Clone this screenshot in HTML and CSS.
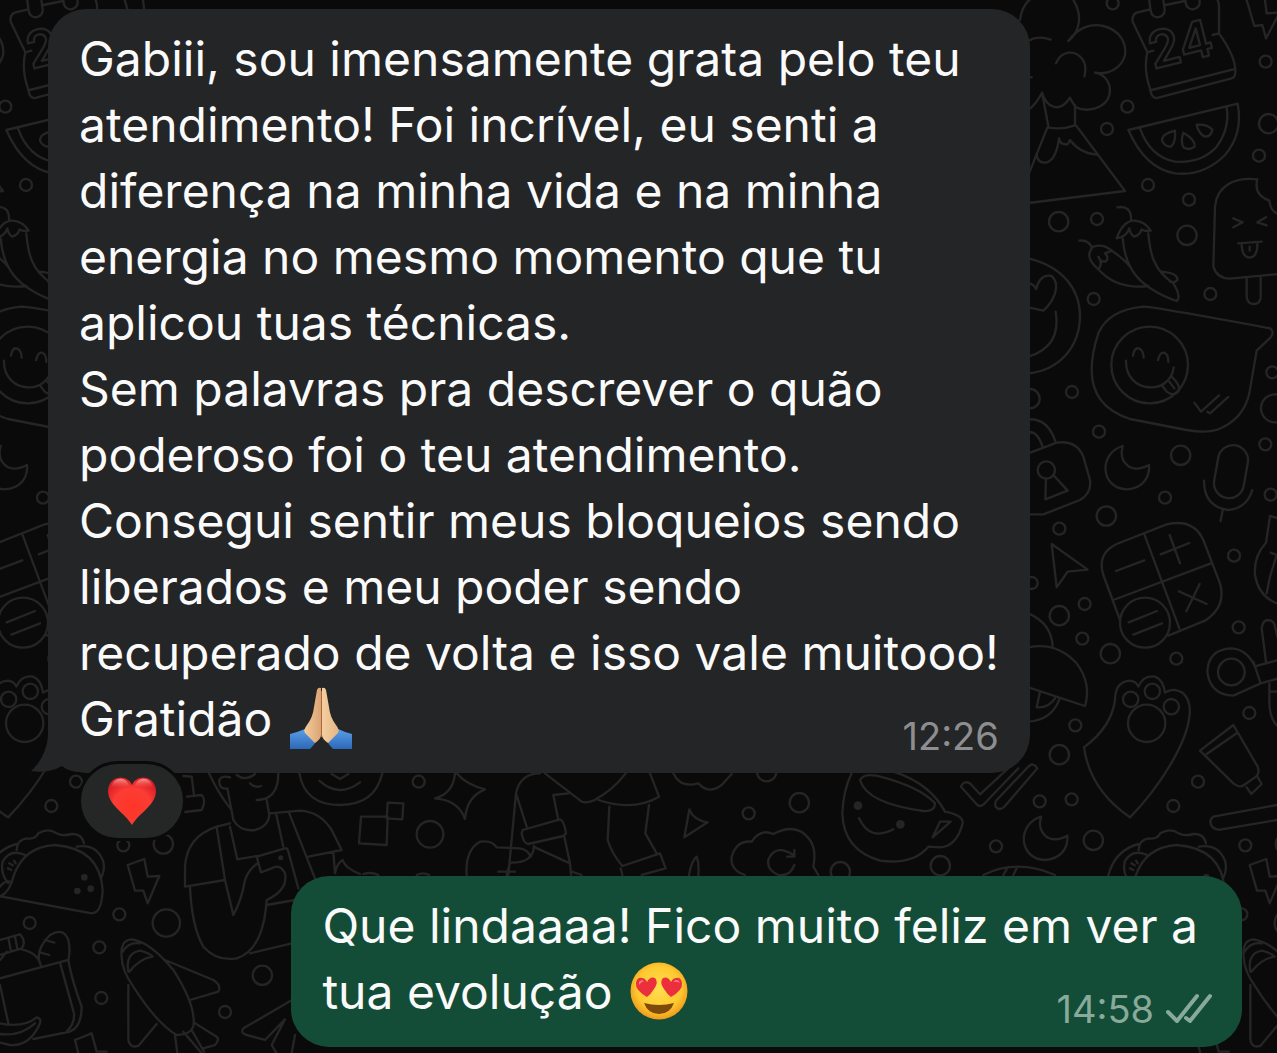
FILE: index.html
```html
<!DOCTYPE html>
<html lang="pt-BR">
<head>
<meta charset="utf-8">
<meta name="viewport" content="width=device-width, initial-scale=1">
<title>Conversa</title>
<link rel="stylesheet" href="styles.css">
</head>
<body>
<svg class="wallpaper" aria-hidden="true">
  <defs>
    <path id="moon" d="M308 1338C235 1360 240 1465 320 1468C370 1465 390 1430 387 1395C330 1425 295 1385 308 1338Z"/>
    <g id="doodles">
      <g transform="translate(1020 0) scale(.33333)">
        <!-- volcano -->
        <path d="M0 60C5 20 25 0 40-10M160 0C185 40 185 90 145 123C175 80 215 70 250 78C300 90 320 130 315 165C305 205 265 225 225 218C260 225 275 255 268 285C258 325 200 340 165 320M25 330Q50 310 66 278C80 325 120 340 150 293Q158 310 168 322M66 278L86 383Q125 390 165 376V315M82 383L25 525M168 376L315 573L25 609M25 122Q55 105 92 119M108 190C125 150 165 150 185 175Q202 195 193 229M25 230L35 232M117 415Q107 490 70 488Q50 485 50 460M117 415Q122 435 135 432Q143 438 150 420Q180 460 230 464"/>
        <!-- calendar -->
        <path d="M390 28L350 38Q335 45 338 65L382 157Q370 210 390 265Q395 300 415 293L635 235Q650 230 645 200Q640 160 597 100V20Q597 0 585-10M395 270L640 208M382 157L400 152M578 105L597 100M436 15L494 3"/>
        <rect x="390" y="-20" width="42" height="72" rx="21" transform="rotate(-8 411 16)"/>
        <rect x="496" y="-40" width="42" height="68" rx="21" transform="rotate(-8 517 0)"/>
        <text class="wallpaper-date" x="400" y="208" transform="rotate(-14 400 208)">24</text>
        <!-- watermelon -->
        <path d="M325 390L653 311Q670 400 615 465Q550 530 465 520Q375 505 325 390ZM360 385Q390 470 465 485Q545 490 590 440Q630 385 620 322M465 392Q425 402 426 422Q435 440 452 440Q468 430 465 392ZM490 398Q480 430 492 443Q508 452 524 440Q528 420 490 398ZM530 374Q535 400 555 410Q573 410 577 390Q565 372 530 374Z"/>
        <!-- ice lolly -->
        <path d="M712 538C640 530 590 560 585 620L580 800Q590 835 630 836L775 822M712 538Q700 585 748 602Q752 635 775 642M640 655L668 667L640 682M738 652L712 667L740 676M655 730L725 725M665 732Q665 772 690 773Q713 770 712 730M689 740V752M680 835V890Q682 912 700 912Q722 912 722 890V830"/>
        <path d="M680 0L703 78L727 75L738 115L775 45M735 0L740 40L771 38"/>
        <!-- chillies -->
        <path d="M292 622Q335 615 333 660M290 715Q310 660 345 662Q375 665 392 692Q375 695 365 688Q360 705 342 710Q332 705 328 685Q320 710 290 715M308 715C315 800 350 860 470 903Q485 890 460 850C400 810 390 760 385 700M178 722Q205 718 215 742M235 808Q190 770 220 740Q250 730 275 752L255 760Q270 775 255 785Q240 785 235 770Q250 790 235 808Q290 870 385 858M275 752Q310 775 330 800M425 815Q475 820 472 840Q465 850 450 845"/>
        <!-- heart-eyed face -->
        <path d="M25 775C130 800 180 870 180 950C178 1040 120 1110 25 1120M25 848Q45 855 48 868Q60 820 95 828Q115 845 105 880Q95 910 70 932L25 922M107 935Q125 1040 25 1070"/>
        <!-- speech balloon -->
        <path d="M370 920Q400 920 750 985Q765 995 752 1012L710 1052L688 1180Q670 1260 590 1290Q555 1300 500 1290L330 1257Q215 1220 215 1110Q215 1060 235 1000Q265 930 370 920ZM339 1067Q343 1043 356 1045Q370 1050 371 1073M414 1080Q420 1056 432 1058Q445 1062 445 1086M318 1082C315 1180 450 1190 461 1102M425 1155L440 1175Q460 1190 475 1175Q485 1160 455 1130M448 1145L463 1165M523 1208L543 1235L597 1186M562 1235L570 1240L625 1191"/>
        <circle cx="389" cy="1095" r="115"/>
        <use href="#moon"/>
        <!-- microphone -->
        <rect x="588" y="1335" width="90" height="160" rx="45" transform="rotate(10 633 1415)"/>
        <path d="M552 1442Q552 1520 625 1530Q680 1525 697 1470M608 1530L602 1563"/>
        <!-- padlock -->
        <path d="M25 1258Q85 1255 107 1327M25 1298Q50 1290 68 1340M25 1360L110 1328Q170 1320 190 1370L210 1440Q215 1480 180 1500L70 1543H25M78 1436L76 1498L143 1472L100 1425"/>
        <circle cx="79" cy="1410" r="26"/>
        <path d="M95 1632L203 1709L143 1715L110 1762Z"/>
        <!-- calculator -->
        <path d="M300 1860L250 1725Q230 1660 290 1632L440 1573Q520 1555 550 1620L600 1750Q620 1820 555 1862L445 1907M372 1600L478 1885M280 1800L573 1690M288 1713L373 1681M422 1663L508 1629M449 1605L480 1690M477 1774L560 1812M539 1752L499 1834M326 1867L411 1833M340 1904L426 1870"/>
        <circle cx="375" cy="1868" r="75"/>
        <!-- mushroom -->
        <path d="M25 1840Q95 1870 98 1940M25 1942Q110 1925 170 1990Q215 2050 195 2118L25 2062M118 2098Q95 2160 25 2165M60 2075L50 2122Q85 2125 105 2095"/>
        <!-- paw -->
        <path d="M192 2242Q275 2180 285 2100Q285 2045 330 2042Q350 2045 355 2060Q370 2025 405 2030Q430 2040 435 2078Q460 2060 490 2080Q515 2105 508 2150C500 2230 420 2360 330 2452Q210 2370 192 2242Z"/>
        <circle cx="380" cy="2170" r="56"/><circle cx="332" cy="2098" r="23"/><circle cx="397" cy="2074" r="23"/><circle cx="454" cy="2120" r="23"/>
        <path d="M705 2000Q680 1945 630 1945Q565 1950 562 2015Q570 2085 640 2087L722 2050L700 1985M710 1998L775 1980M722 2050L775 2035M738 1985L725 1885Q728 1860 745 1860Q762 1862 765 1880L775 1920M748 2050V2110Q750 2160 775 2180M750 2075H775"/>
        <circle cx="634" cy="2016" r="40"/>
        <path d="M775 1555L750 1548L738 1628Q700 1670 705 1725Q715 1790 775 1812M752 1658L770 1665L750 1730L740 1780"/>
        <!-- paint tube -->
        <path d="M640 2175L540 2252L640 2350Q660 2365 672 2355L708 2330Q720 2320 713 2300ZM560 2262L650 2200M680 2362L694 2382L725 2352L712 2330"/>
        <g class="bubbles">
          <circle cx="278" cy="10" r="18"/><circle cx="322" cy="320" r="18"/><circle cx="261" cy="387" r="18"/><circle cx="737" cy="185" r="18"/><circle cx="746" cy="371" r="29"/><circle cx="717" cy="467" r="18"/><circle cx="384" cy="555" r="18"/><circle cx="507" cy="599" r="18"/><circle cx="231" cy="657" r="18"/><circle cx="116" cy="665" r="29"/><circle cx="501" cy="706" r="29"/>
          <circle cx="221" cy="897" r="18"/><circle cx="571" cy="882" r="18"/><circle cx="156" cy="1176" r="18"/><circle cx="30" cy="1196" r="29"/><circle cx="237" cy="1295" r="18"/><circle cx="482" cy="1366" r="29"/><circle cx="435" cy="1493" r="18"/><circle cx="259" cy="1548" r="29"/><circle cx="757" cy="1117" r="18"/><circle cx="765" cy="1225" r="42"/><circle cx="736" cy="1333" r="18"/><circle cx="752" cy="1484" r="18"/>
          <circle cx="118" cy="1586" r="18"/><circle cx="35" cy="1749" r="18"/><circle cx="194" cy="1812" r="18"/><circle cx="118" cy="1847" r="29"/><circle cx="187" cy="1916" r="18"/><circle cx="271" cy="1961" r="29"/><circle cx="469" cy="1976" r="18"/><circle cx="642" cy="1667" r="18"/><circle cx="656" cy="1882" r="18"/><circle cx="688" cy="2139" r="18"/><circle cx="166" cy="2176" r="18"/><circle cx="118" cy="2264" r="29"/>
          <circle cx="59" cy="2404" r="18"/><circle cx="155" cy="2398" r="18"/><circle cx="534" cy="2345" r="18"/><circle cx="460" cy="2418" r="18"/><circle cx="220" cy="2521" r="29"/><circle cx="-72" cy="2539" r="18"/><circle cx="-239" cy="2597" r="29"/>
        </g>
        <use href="#moon" x="-245" y="1112"/>
      </g>
      <g transform="translate(900 700) scale(.33333)">
        <path d="M183 260Q190 240 210 250L240 283L330 200M183 260L232 315Q242 322 252 312L355 205M290 300L385 200Q400 185 412 205L315 318Q300 335 287 320Q283 308 290 300ZM250 525Q350 475 465 525M310 525L320 508M340 525L350 505M1131 315L940 350Q925 360 935 378Q945 392 965 388L1131 360"/>
      </g>
      <g transform="translate(0 740) scale(.33333)">
        <!-- taco -->
        <path d="M-41 405Q-20 330 50 312M50 330Q50 300 80 295Q105 300 115 280Q145 262 170 280Q185 290 215 282Q245 280 252 310M0 470Q30 455 40 410Q70 320 165 315Q300 325 308 450Q305 520 275 520L-20 465M230 320Q290 310 310 365Q315 390 305 410M75 345Q30 325 8 365Q0 400 25 430M24 385L34 390M28 370L38 376M42 362L47 370M0 440Q15 420 30 425"/>
        <g class="solid"><circle cx="253" cy="412" r="10"/><circle cx="232" cy="453" r="10"/><circle cx="272" cy="446" r="10"/></g>
        <circle cx="490" cy="312" r="29"/><circle cx="370" cy="316" r="18"/><circle cx="358" cy="523" r="18"/><circle cx="89" cy="549" r="18"/><circle cx="298" cy="622" r="18"/><circle cx="499" cy="549" r="41"/><circle cx="304" cy="774" r="18"/><circle cx="787" cy="706" r="29"/><circle cx="675" cy="816" r="18"/>
        <path d="M383 375L433 357L443 410L478 408L443 490L430 452H405ZM225 900L275 880L290 935H320M225 900L235 940"/>
        <!-- grocery bag -->
        <path d="M0 715L205 660Q215 720 245 800Q245 860 210 875L100 897M180 668L222 820Q225 850 200 875M0 735L25 850M120 670Q105 630 150 585Q190 560 205 600Q212 630 205 660M135 600L163 608M120 637L148 645M0 600L60 583Q80 605 65 625L0 645M25 595L33 633M45 590L52 626M65 628Q115 640 122 675M0 660L20 635M0 850Q70 865 110 832Q125 835 120 850Q90 920 30 915L0 908M0 882Q60 890 105 850"/>
        <!-- rocket -->
        <path d="M365 650Q360 600 395 598Q450 605 520 690Q590 800 580 860Q570 885 530 885Q470 850 400 740Q365 690 365 650ZM385 695Q375 640 420 632Q450 640 458 650Q420 655 388 695M368 635Q385 605 420 610M495 660L640 720Q665 735 655 755L570 780M385 735V900Q390 925 415 918L470 852M585 850L650 890Q660 900 645 915L610 925M550 875L605 940M575 870L612 935M525 885L532 940M885 775L730 865Q720 880 740 885L795 900L855 838L815 915L830 940M885 885L875 940"/>
        <!-- person with phone -->
        <path d="M555 440V380Q560 290 650 260L690 250M650 262L675 420L700 525Q725 480 735 420Q745 390 770 372M570 440Q575 560 610 620Q650 665 710 655Q790 630 800 480Q865 450 855 400Q840 370 815 385L783 397L770 350L855 325Q862 322 865 335L895 445M555 440L675 420M690 260L712 358L770 348M800 495L885 480M750 640L885 608M627 100Q660 170 695 210M683 150L700 240Q720 275 765 270Q805 260 808 225L800 180M770 180Q835 180 835 100M683 145Q655 150 658 120Q665 105 690 112M750 130Q765 145 783 138M710 105Q735 125 765 102M550 108L575 110L582 165M560 170L605 165Q620 180 605 210L555 216"/>
        <circle cx="842" cy="353" r="4"/>
      </g>
      <g transform="translate(160 750) scale(.33333)">
        <path d="M330 190L420 182Q480 185 515 240L545 300L445 320M387 188L465 385M348 190L370 290M520 305L525 370Q530 340 548 330Q555 355 600 372M610 372Q635 365 655 375M770 375Q790 365 808 375M418 70Q435 165 540 165Q645 165 667 70M478 92Q535 145 600 97M515 72L540 87L565 72M603 200H683L680 285L597 280ZM683 158L730 160L727 208L680 205ZM885 70Q880 130 825 145Q895 150 915 207Q920 140 975 118Q920 105 890 70"/>
        <circle cx="776" cy="95" r="18"/><circle cx="810" cy="253" r="40"/>
      </g>
      <g transform="translate(460 760) scale(.33333)">
        <path d="M145 345L168 100Q180 40 240 40M168 100L200 200M255 40L365 125Q380 130 400 122Q460 90 497 40M325 100L280 105L295 180M188 210L300 178Q312 180 318 220L310 228L205 252Q190 250 185 220ZM570 40L597 110Q520 155 415 120M448 140L443 240Q455 280 487 318M567 135L556 220L590 280M487 318L600 280L617 325L545 345M482 325L487 345M313 230L330 310L333 345M225 262L330 310M222 258Q220 310 150 308L140 345M335 335L365 345M20 345Q15 270 60 245Q95 240 110 262L180 265Q205 270 212 290M115 335H165M640 40Q660 85 715 70Q745 105 785 75L815 42M688 148Q700 180 743 187L673 232ZM687 345Q695 300 710 290Q718 310 715 345"/>
        <!-- cloud sync -->
        <path d="M855 345Q810 330 815 290Q830 240 875 245Q900 205 940 222Q1010 185 1050 240Q1070 270 1060 320L1075 345M1003 315Q990 350 955 345Q920 330 925 300Q945 250 1000 285M1003 270V290H982"/>
        <!-- cup -->
        <path d="M1175 40Q1150 90 1147 160Q1150 270 1260 302Q1360 315 1405 260M1200 60Q1210 40 1250 47Q1380 80 1425 130Q1425 155 1390 153Q1220 130 1200 60ZM1300 35Q1410 70 1455 155Q1510 165 1508 190Q1490 260 1440 262L1405 260M1440 185H1472L1418 232ZM1197 175Q1230 245 1300 208"/>
        <g class="solid"><circle cx="1194" cy="137" r="13"/><circle cx="1321" cy="193" r="13"/></g>
        <circle cx="920" cy="35" r="29"/><circle cx="866" cy="160" r="18"/><circle cx="1018" cy="128" r="29"/><circle cx="1141" cy="335" r="29"/>
      </g>
    </g>
  </defs>
  <use href="#doodles"/>
  <use href="#doodles" x="-1122"/>
  <use href="#doodles" x="1122"/>
</svg>

<main class="chat">
  <article class="message received">
    <svg class="tail" viewBox="0 0 50 40" aria-hidden="true"><path d="M17 0C17 15 10 29 0 38Q17 41 31 33Q38 39 50 39V0Z"/></svg>
    <p>Gabiii, sou imensamente grata pelo teu<br>atendimento! Foi incrível, eu senti a<br>diferença na minha vida e na minha<br>energia no mesmo momento que tu<br>aplicou tuas técnicas.<br>Sem palavras pra descrever o quão<br>poderoso foi o teu atendimento.<br>Consegui sentir meus bloqueios sendo<br>liberados e meu poder sendo<br>recuperado de volta e isso vale muitooo!</p>
    <div class="last-line">
      <p>Gratidão
        <svg class="emoji" viewBox="0 0 62 62" role="img" aria-label="Mãos unidas">
          <defs>
            <linearGradient id="skin" x1="0" y1="0" x2="1" y2="0"><stop offset="0" stop-color="#f3cc9d"/><stop offset="1" stop-color="#dca473"/></linearGradient>
            <linearGradient id="skin2" x1="0" y1="0" x2="1" y2="0"><stop offset="0" stop-color="#f5cfa0"/><stop offset="1" stop-color="#e5b583"/></linearGradient>
            <linearGradient id="sleeve" x1="0" y1="0" x2="0" y2="1"><stop offset="0" stop-color="#5b9fe8"/><stop offset="1" stop-color="#2c68b8"/></linearGradient>
          </defs>
          <path fill="url(#sleeve)" d="M0 47Q8 45 15 42L27 53Q24 58 20 62H0ZM62 47Q54 45 48 42L36 53Q39 58 43 62H62Z"/>
          <path fill="url(#skin)" d="M27 3Q28 0 31 1V48Q31 52 25 56L15 46Q13 43 17 38Q23 30 24 20Z"/>
          <path fill="url(#skin2)" d="M36 3Q35 0 32 1V48Q32 52 38 56L48 46Q50 43 46 38Q40 30 39 20Z"/>
          <path fill="none" stroke="#a8673c" d="M31.500 4V50"/>
        </svg>
      </p>
      <time datetime="12:26">12:26</time>
    </div>
    <span class="reaction">
      <svg viewBox="0 0 50 50" role="img" aria-label="Coração vermelho">
        <defs>
          <radialGradient id="heart" cx=".5" cy=".62" r=".6"><stop offset="0" stop-color="#ff3426"/><stop offset=".65" stop-color="#fb3d35"/><stop offset="1" stop-color="#dc2027"/></radialGradient>
          <linearGradient id="gloss" x1="0" y1="0" x2="0" y2="1"><stop offset="0" stop-color="#ffd0c8" stop-opacity=".7"/><stop offset="1" stop-color="#ff6a5e" stop-opacity="0"/></linearGradient>
        </defs>
        <path fill="url(#heart)" d="M25 9C21-2 2-2 1 15C1 29 18 37 25 49C32 37 49 29 49 15C48-2 29-2 25 9Z"/>
        <path fill="url(#gloss)" d="M4 12C6 0 20 0 22 10Q13 11 4 12ZM28 10C30 0 44 0 46 12Q37 11 28 10Z"/>
      </svg>
    </span>
  </article>

  <article class="message sent">
    <p>Que lindaaaa! Fico muito feliz em ver a</p>
    <div class="last-line">
      <p>tua evolução
        <svg class="emoji face" viewBox="0 0 58 58" role="img" aria-label="Olhos de coração">
          <defs><radialGradient id="face" cx=".5" cy=".45" r=".55"><stop offset="0" stop-color="#ffe04e"/><stop offset=".7" stop-color="#fec930"/><stop offset="1" stop-color="#f09a1a"/></radialGradient></defs>
          <circle cx="29" cy="29" r="28.500" fill="url(#face)"/>
          <path fill="#7d4a0c" d="M14 41Q29 45 44 41Q40 52 29 52Q18 52 14 41Z"/>
          <path fill="#ec2f3c" d="M17 35Q5 28 6 21Q7 15 12 16Q15 16 17 20Q20 14 25 16Q29 20 24 27Q21 32 17 35Z"/>
          <path fill="#ec2f3c" d="M41 35Q53 28 52 21Q51 15 46 16Q43 16 41 20Q38 14 33 16Q29 20 34 27Q37 32 41 35Z"/>
          <path fill="#ff7d84" d="M9 20Q11 17 14 19Q11 20 9 23ZM44 19Q48 16 50 21Q47 19 44 20Z"/>
        </svg>
      </p>
      <time datetime="14:58">14:58
        <svg class="ticks" viewBox="0 0 46 32" role="img" aria-label="Entregue"><path d="M2 19L11 28L31 3M20 25L24 28L44 3"/></svg>
      </time>
    </div>
  </article>
</main>
</body>
</html>
```
FILE: styles.css
```css
* { box-sizing: border-box; }

body {
  margin: 0;
  position: relative;
  min-height: 100vh;
  overflow-x: hidden;
  background: #0a0a0a;
  color: #fafafa;
  font-family: Inter, "Liberation Sans", sans-serif;
  font-size: 48px;
  line-height: 66px;
}

.wallpaper {
  position: absolute;
  inset: 0;
  width: 100%;
  height: 100%;
  fill: none;
  stroke: #252526;
  stroke-width: 7px;
  stroke-linecap: round;
  stroke-linejoin: round;
}

.wallpaper .solid { fill: #252526; stroke: none; }

.wallpaper-date {
  font-size: 152px;
  font-weight: 600;
}

.chat {
  position: relative;
  display: flex;
  flex-direction: column;
  gap: 103px;
  padding: 9px 35px 6px 48px;
}

.message {
  position: relative;
  border-radius: 38px;
  white-space: nowrap;
}

.message p { margin: 0; }

.received {
  align-self: flex-start;
  padding: 17px 31px 21px;
  background: #242527;
}

.sent {
  align-self: flex-end;
  padding: 17px 30px 22px 31px;
  background: #144d37;
}

.sent > p { padding-right: 14px; }

.last-line {
  display: flex;
  justify-content: space-between;
  align-items: flex-end;
}

time {
  display: flex;
  align-items: center;
  gap: 12px;
  height: 32px;
  color: #8e8e91;
  font-size: 38px;
  line-height: 32px;
}

.sent time { color: #88aa9b; }

.tail {
  position: absolute;
  left: -17px;
  bottom: 0;
  width: 50px;
  height: 40px;
  fill: #242527;
}

.emoji {
  width: 62px;
  height: 62px;
  margin-left: 4px;
  vertical-align: -13px;
}

.face {
  width: 58px;
  height: 58px;
  vertical-align: -11px;
}

.ticks {
  width: 46px;
  height: 32px;
  fill: none;
  stroke: #88aa9b;
  stroke-width: 4px;
  stroke-linecap: round;
  stroke-linejoin: round;
}

.reaction {
  position: absolute;
  left: 30px;
  bottom: -68px;
  display: flex;
  align-items: center;
  justify-content: center;
  width: 108px;
  height: 80px;
  border: 3px solid #0a0a0a;
  border-radius: 40px;
  background: #242726;
}

.reaction svg {
  width: 50px;
  height: 50px;
}
```
